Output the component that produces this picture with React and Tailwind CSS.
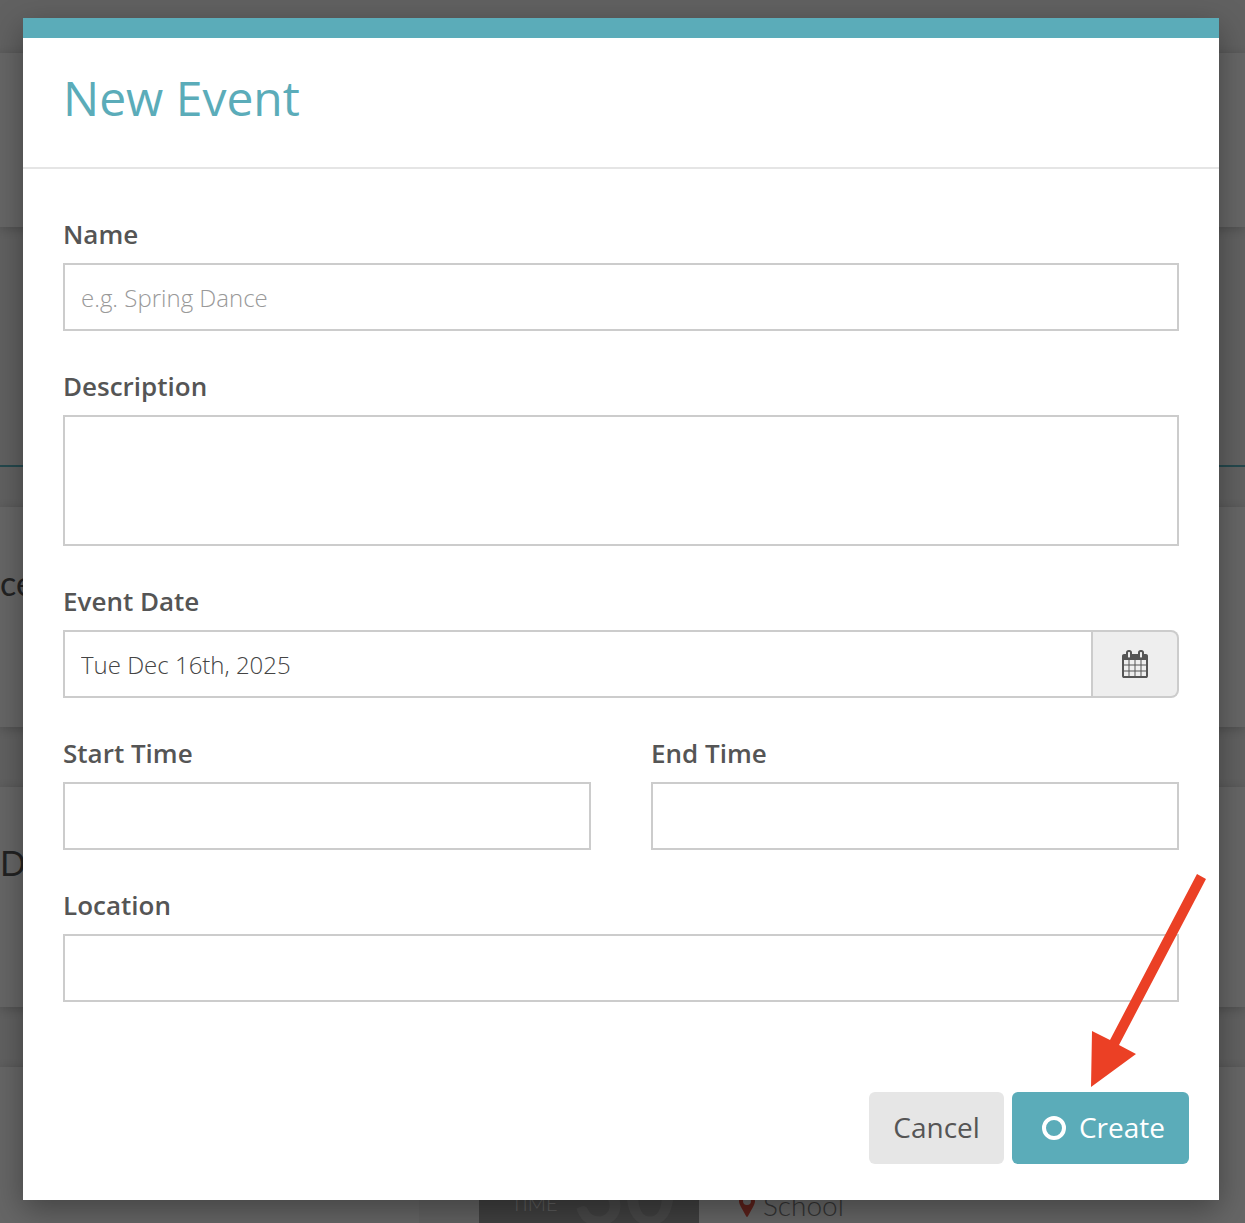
import { useState } from "react";

const LABEL = "mb-3 block text-[26px] leading-[34px] font-semibold text-[#555]";
const FIELD = "block w-full rounded-none border-2 border-[#ccc] bg-white px-4 text-2xl font-light text-[#444] outline-none placeholder:text-[#999] focus:border-[#5bacb9]";
const CARD  = "bg-[#666] shadow-[0_2px_10px_rgba(0,0,0,0.2)]";

function CalendarIcon({ className = "" }) {
  return (
    <svg className={className} viewBox="0 0 1664 1792" fill="currentColor" aria-hidden="true">
      <path d="M128 1664h288v-288h-288v288zm352 0h320v-288h-320v288zm-352-352h288v-320h-288v320zm352 0h320v-320h-320v320zm-352-384h288v-288h-288v288zm736 736h320v-288h-320v288zm-384-736h320v-288h-320v288zm768 736h288v-288h-288v288zm-384-352h320v-320h-320v320zm-352-864v-288q0-13-9.5-22.5t-22.5-9.5h-64q-13 0-22.5 9.5t-9.5 22.5v288q0 13 9.5 22.5t22.5 9.5h64q13 0 22.5-9.5t9.5-22.5zm736 864h288v-320h-288v320zm-384-384h320v-288h-320v288zm384 0h288v-288h-288v288zm32-480v-288q0-13-9.5-22.5t-22.5-9.5h-64q-13 0-22.5 9.5t-9.5 22.5v288q0 13 9.5 22.5t22.5 9.5h64q13 0 22.5-9.5t9.5-22.5zm384-64v1280q0 52-38 90t-90 38h-1408q-52 0-90-38t-38-90v-1280q0-52 38-90t90-38h128v-96q0-66 47-113t113-47h64q66 0 113 47t47 113v96h384v-96q0-66 47-113t113-47h64q66 0 113 47t47 113v96h128q52 0 90 38t38 90z" />
    </svg>
  );
}

function Field({ id, label, children }) {
  return (
    <div className="min-w-0 flex-1">
      <label htmlFor={id} className={LABEL}>{label}</label>
      {children}
    </div>
  );
}

// Dimmed events page that sits behind the dialog
function Backdrop() {
  return (
    <div aria-hidden="true" className="absolute inset-0 flex flex-col overflow-hidden bg-[#616161] pt-[53px] font-['Lato',sans-serif]">
      <div className={`h-[174px] shrink-0 ${CARD}`} />
      <div className="mb-10 h-60 shrink-0 border-b-2 border-[#24484d]" />

      <div className="flex flex-col gap-[60px]">
        <div className={`h-[220px] pt-14 text-[34px] leading-10 text-[#222] ${CARD}`}>ce</div>
        <div className={`h-[220px] pt-14 text-[34px] leading-10 text-[#222] ${CARD}`}>D</div>
        <div className={`flex h-[220px] items-start ${CARD}`}>
          <div className="h-full w-[419px] shrink-0" />
          <div className="h-full w-[60px] shrink-0 bg-[#626262]" />
          <div className="flex h-full w-[220px] shrink-0 items-start gap-4 bg-[#404040] pt-[84px] pl-8">
            <span className="pt-10 text-xl leading-6 font-light text-[#606060]">TIME</span>
            <span className="text-[88px] leading-[80px] font-bold text-[#484848]">30</span>
          </div>
          <div className="flex items-center gap-2 pt-[120px] pl-10 text-[28px] leading-9 font-light text-[#333]">
            <svg className="h-6 w-4" viewBox="0 0 16 24" fill="#5c211b">
              <path fillRule="evenodd" d="M8 0a8 8 0 0 0-8 8c0 2 1 4 2 6l5 9q1 2 2 0l5-9c1-2 2-4 2-6a8 8 0 0 0-8-8zm0 4a4 4 0 1 1 0 8a4 4 0 0 1 0-8z" />
            </svg>
            <span>School</span>
          </div>
        </div>
      </div>
    </div>
  );
}

export default function App() {
  const [name, setName]               = useState("");
  const [description, setDescription] = useState("");
  const [date, setDate]               = useState("Tue Dec 16th, 2025");
  const [startTime, setStartTime]     = useState("");
  const [endTime, setEndTime]         = useState("");
  const [location, setLocation]       = useState("");

  return (
    <div className="relative min-h-screen overflow-hidden pt-[18px] pr-[26px] pb-[23px] pl-[23px] font-['Open_Sans',sans-serif]">
      <Backdrop />

      <div role="dialog" aria-labelledby="dialog-title" className="relative border-t-[20px] border-[#5bacb9] bg-white shadow-[0_10px_30px_rgba(0,0,0,0.35)]">
        <header className="border-b-2 border-[#e5e5e5] px-10 pt-8 pb-[41px]">
          <h1 id="dialog-title" className="text-5xl leading-[56px] font-normal text-[#5bacb9]">New Event</h1>
        </header>

        <form onSubmit={(e) => e.preventDefault()}>
          <div className="flex flex-col gap-[38px] px-10 pt-12">
            <Field id="name" label="Name">
              <input id="name" type="text" placeholder="e.g. Spring Dance" value={name} onChange={(e) => setName(e.target.value)} className={`h-[68px] ${FIELD}`} />
            </Field>

            <Field id="description" label="Description">
              <textarea id="description" value={description} onChange={(e) => setDescription(e.target.value)} className={`h-[131px] resize-none py-3 ${FIELD}`} />
            </Field>

            <Field id="date" label="Event Date">
              <div className="flex">
                <input id="date" type="text" value={date} onChange={(e) => setDate(e.target.value)} className={`h-[68px] ${FIELD}`} />
                <button type="button" aria-label="Pick a date" className="grid w-[86px] shrink-0 place-items-center rounded-r-lg border-2 border-l-0 border-[#ccc] bg-[#eee] text-[#555]">
                  <CalendarIcon className="h-7 w-[26px]" />
                </button>
              </div>
            </Field>

            <div className="flex gap-[60px]">
              <Field id="start-time" label="Start Time">
                <input id="start-time" type="text" value={startTime} onChange={(e) => setStartTime(e.target.value)} className={`h-[68px] ${FIELD}`} />
              </Field>
              <Field id="end-time" label="End Time">
                <input id="end-time" type="text" value={endTime} onChange={(e) => setEndTime(e.target.value)} className={`h-[68px] ${FIELD}`} />
              </Field>
            </div>

            <Field id="location" label="Location">
              <input id="location" type="text" value={location} onChange={(e) => setLocation(e.target.value)} className={`h-[68px] ${FIELD}`} />
            </Field>
          </div>

          <footer className="flex justify-end gap-2 px-[30px] pt-[90px] pb-9 text-[28px] leading-10">
            <button type="button" className="h-[72px] rounded-md bg-[#e6e6e6] px-6 pb-[2px] text-[#555]">Cancel</button>
            <button type="submit" className="flex h-[72px] items-center gap-[7px] rounded-md bg-[#5bacb9] px-6 text-white">
              <span className="grid w-9 place-items-center">
                <span className="size-6 rounded-full border-4 border-white" />
              </span>
              <span className="pb-[2px]">Create</span>
            </button>
          </footer>
        </form>

        {/* Arrow pointing at the Create button */}
        <svg className="pointer-events-none absolute right-[9px] bottom-[110px] h-[220px] w-[130px]" viewBox="0 0 130 220" fill="#eb4025" aria-hidden="true">
          <path d="M117 4L126 9L39 175L56 184L11 217L12 161L30 170Z" />
        </svg>
      </div>
    </div>
  );
}
